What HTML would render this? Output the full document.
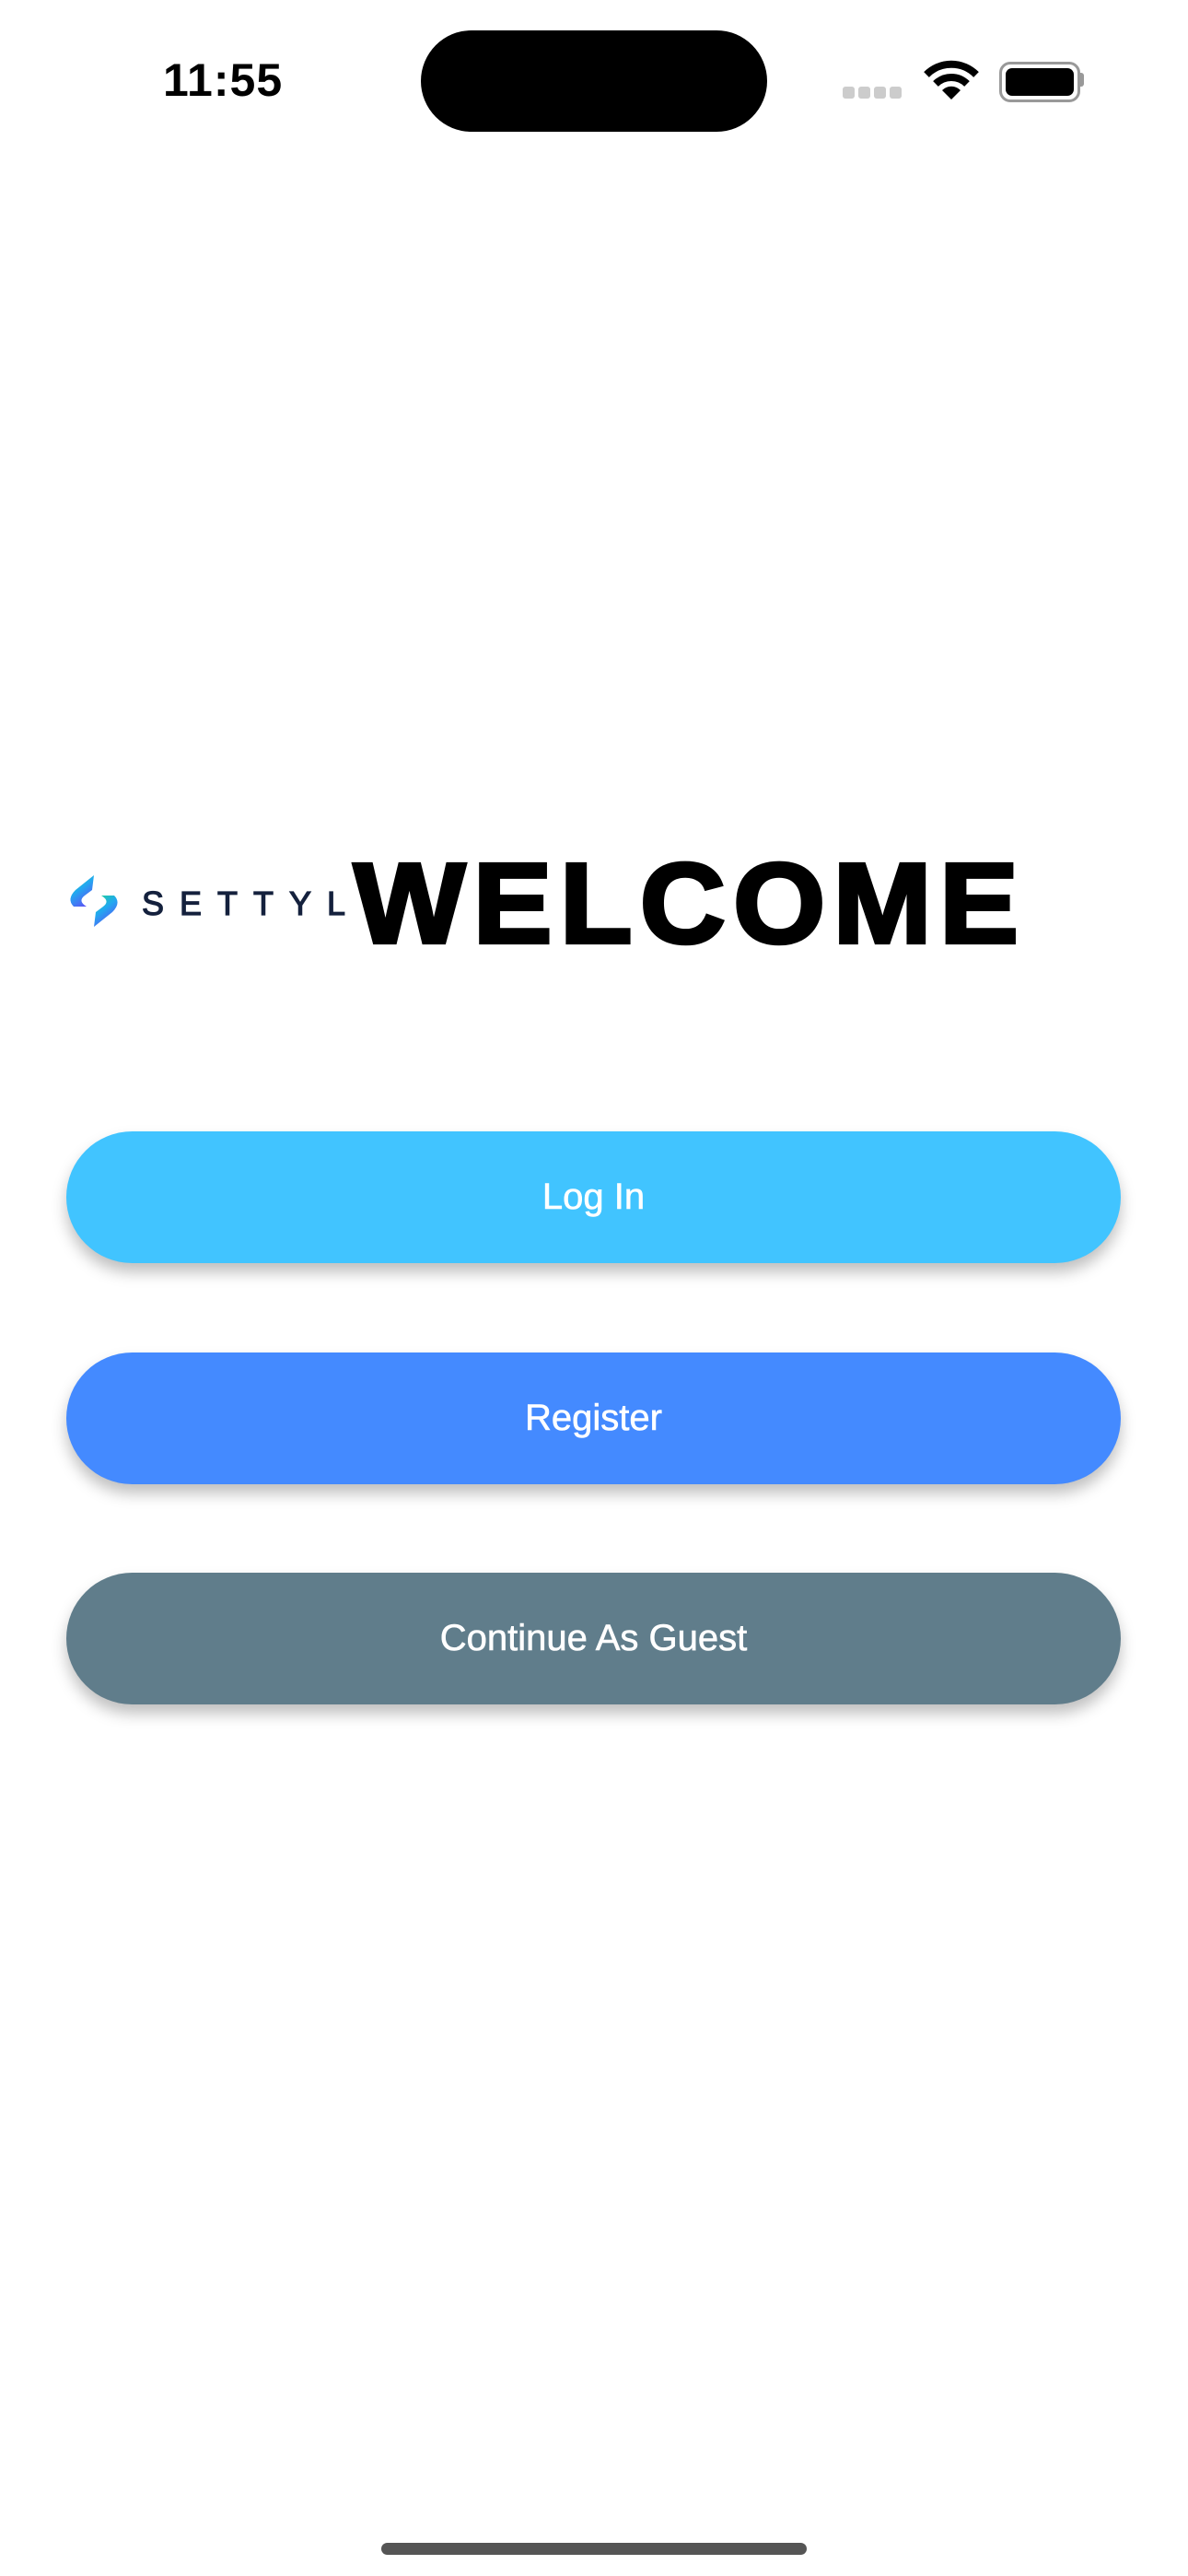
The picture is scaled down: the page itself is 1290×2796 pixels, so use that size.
<!DOCTYPE html>
<html><head><meta charset="utf-8"><style>
html,body{margin:0;padding:0;background:#fff;}
body{width:1290px;height:2796px;position:relative;overflow:hidden;font-family:"Liberation Sans",sans-serif;}
.abs{position:absolute;}
.btn{position:absolute;left:72px;width:1145px;height:143px;border-radius:72px;color:#fff;font-size:40px;display:flex;align-items:center;justify-content:center;box-shadow:0 10px 16px rgba(0,0,0,0.25);-webkit-text-stroke:0.6px #fff;}
</style></head><body>
<div class="abs" style="left:177px;top:58px;font-size:50px;font-weight:bold;letter-spacing:1px;">11:55</div>
<div class="abs" style="left:457px;top:33px;width:376px;height:110px;background:#000;border-radius:55px;"></div>
<div class="abs" style="left:915px;top:94px;width:13px;height:13px;background:#ccc;border-radius:3px;"></div>
<div class="abs" style="left:932px;top:94px;width:13px;height:13px;background:#ccc;border-radius:3px;"></div>
<div class="abs" style="left:949px;top:94px;width:13px;height:13px;background:#ccc;border-radius:3px;"></div>
<div class="abs" style="left:966px;top:94px;width:13px;height:13px;background:#ccc;border-radius:3px;"></div>
<svg class="abs" style="left:1003px;top:64px" width="60" height="46" viewBox="0 0 60 46">
<path d="M3 17 A38 38 0 0 1 57 17" stroke="#000" stroke-width="8" fill="none"/>
<path d="M13 27 A24 24 0 0 1 47 27" stroke="#000" stroke-width="8" fill="none"/>
<path d="M30 44 L20 34 A14 14 0 0 1 40 34 Z" fill="#000"/>
</svg>
<div class="abs" style="left:1085px;top:67px;width:82px;height:38px;border:3px solid #999;border-radius:12px;"></div>
<div class="abs" style="left:1092px;top:74px;width:74px;height:30px;background:#000;border-radius:7px;"></div>
<div class="abs" style="left:1172px;top:79px;width:5px;height:15px;background:#999;border-radius:0 3px 3px 0;"></div>
<svg class="abs" style="left:72px;top:948px" width="60" height="60" viewBox="0 0 60 60">
<defs><linearGradient id="g" x1="0" y1="0" x2="0.6" y2="1"><stop offset="0" stop-color="#1ed68c"/><stop offset="0.5" stop-color="#22a9f0"/><stop offset="1" stop-color="#5a55f5"/></linearGradient></defs>
<path d="M30 2 L10 18 Q0 28 8 36 L22 36 Q12 30 20 24 L28 18 Z" fill="url(#g)"/>
<path d="M30 58 L50 42 Q60 32 52 24 L38 24 Q48 30 40 36 L32 42 Z" fill="url(#g)"/>
</svg>
<div class="abs" style="left:154px;top:961px;font-size:36px;color:#14213d;-webkit-text-stroke:1.2px #14213d;letter-spacing:17px;line-height:40px;">SETTYL</div>
<div class="abs" style="left:384px;top:919px;font-size:120px;font-weight:bold;line-height:120px;-webkit-text-stroke:4px #000;letter-spacing:8px;transform:scale(1.07,1.03);transform-origin:left top;white-space:nowrap;">WELCOME</div>
<div class="btn" style="top:1228px;background:#41c4ff;">Log In</div>
<div class="btn" style="top:1468px;background:#448aff;">Register</div>
<div class="btn" style="top:1707px;background:#607d8b;">Continue As Guest</div>
<div class="abs" style="left:414px;top:2760px;width:462px;height:13px;background:#555;border-radius:7px;"></div>
</body></html>
